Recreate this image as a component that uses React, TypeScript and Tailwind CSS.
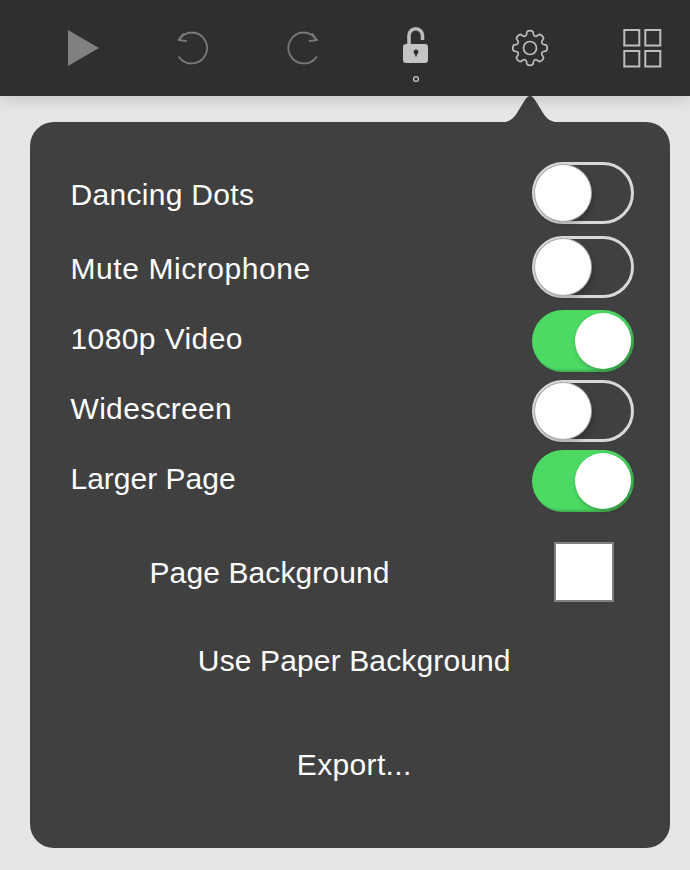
import React from "react";

function gearPath(cx: number, cy: number, rOut: number, rIn: number, teeth: number) {
  const pts: string[] = [];
  const step = (Math.PI * 2) / teeth;
  for (let i = 0; i < teeth; i++) {
    const a = i * step - Math.PI / 2;
    const p = (r: number, t: number) => `${(cx + r * Math.cos(a + t * step)).toFixed(2)} ${(cy + r * Math.sin(a + t * step)).toFixed(2)}`;
    pts.push(`${i === 0 ? "M" : "L"}${p(rIn + 0.6, -0.36)}`);
    pts.push(`L${p(rOut - 0.8, -0.22)}`);
    pts.push(`Q${p(rOut + 0.6, 0)} ${p(rOut - 0.8, 0.22)}`);
    pts.push(`L${p(rIn + 0.6, 0.36)}`);
    pts.push(`Q${p(rIn - 0.6, 0.5)} ${p(rIn + 0.6, 0.64)}`);
  }
  return pts.join(" ") + "Z";
}

function Toolbar() {
  return (
    <div className="h-24 w-full bg-[#2f2f2f] shadow-[0_4px_14px_rgba(0,0,0,0.14)] relative z-10">
      <svg width="690" height="96" viewBox="0 0 690 96" fill="none" className="block">
        <polygon points="68,30 68,66 99,48" fill="#808080" />
        <g stroke="#787878" strokeWidth="1.8" strokeLinecap="round" strokeLinejoin="round">
          <path d="M179 40 C182 35 187 32.5 192 32.5 A15.5 15.5 0 1 1 179 57" />
          <path d="M183 34 L178.5 40 L186 41" />
          <path d="M316.5 40 C313.5 35 308.5 32.5 303.5 32.5 A15.5 15.5 0 1 0 316.5 57" />
          <path d="M312.5 34 L317 40 L309.5 41" />
        </g>
        <path d="M409 46 V35.5 A6.75 6.75 0 0 1 422.5 35.5 V40" stroke="#bcbcbc" strokeWidth="3.6" />
        <rect x="403" y="44" width="25" height="19" rx="3" fill="#c4c4c4" />
        <circle cx="416" cy="52" r="2.4" fill="#2f2f2f" />
        <path d="M414.8 53 L417.2 53 L416.6 56.5 L415.4 56.5 Z" fill="#2f2f2f" />
        <circle cx="416" cy="79" r="2.4" stroke="#c8c8c8" strokeWidth="1.3" />
        <path d={gearPath(530, 48, 17.5, 12.8, 8)} stroke="#bcbcbc" strokeWidth="1.7" strokeLinejoin="round" />
        <circle cx="530" cy="48" r="6.5" stroke="#bcbcbc" strokeWidth="1.7" />
        <g stroke="#bdbdbd" strokeWidth="2">
          <rect x="624.3" y="30" width="15" height="15.5" />
          <rect x="645.3" y="30" width="15" height="15.5" />
          <rect x="624.3" y="51" width="15" height="15.5" />
          <rect x="645.3" y="51" width="15" height="15.5" />
        </g>
      </svg>
    </div>
  );
}

function Toggle({ on }: { on: boolean }) {
  return on ? (
    <div className="flex h-[62px] w-[102px] shrink-0 items-center justify-end rounded-full bg-[#4cd964] pr-[3px] shadow-[inset_-2px_-2px_2px_rgba(0,0,0,0.18)]">
      <div className="h-[56px] w-[56px] rounded-full bg-white shadow-[1px_2px_4px_rgba(0,0,0,0.25)]" />
    </div>
  ) : (
    <div className="flex h-[62px] w-[102px] shrink-0 items-center justify-start rounded-full border-[3px] border-[#d8d8d8]">
      <div className="h-[56px] w-[56px] rounded-full bg-white shadow-[0_0_0_1px_#a8a8a8,3px_4px_5px_rgba(0,0,0,0.2)]" />
    </div>
  );
}

function Row({ label, on, className, labelClass }: { label: string; on: boolean; className: string; labelClass: string }) {
  return (
    <div className={`flex items-center justify-between ${className}`}>
      <span className={labelClass}>{label}</span>
      <Toggle on={on} />
    </div>
  );
}

export default function App() {
  return (
    <div className="h-[870px] w-[690px] overflow-hidden bg-[#e6e6e6] font-['Liberation_Sans',sans-serif] text-[30px] leading-[34px] text-white">
      <Toolbar />
      <div className="relative ml-[30px] mt-[26px] h-[726px] w-[640px] rounded-[24px] bg-[#404040] pl-[40.5px] pr-[36px] pt-[40px]">
        <svg width="64" height="27" viewBox="0 0 64 27" className="absolute left-[468px] top-[-26px] block">
          <path d="M2 26.5 C11 26.5 15 23 19 17 L26 5.5 C28.5 1.5 30 0 32 0 C34 0 35.5 1.5 38 5.5 L45 17 C49 23 53 26.5 62 26.5 V27 H2 Z" fill="#404040" />
        </svg>
        <Row label="Dancing Dots" on={false} className="" labelClass="mt-1 tracking-[0.3px]" />
        <Row label="Mute Microphone" on={false} className="mt-3" labelClass="mt-1 tracking-[0.57px]" />
        <Row label="1080p Video" on={true} className="mt-3" labelClass="-mt-1 tracking-[0.4px]" />
        <Row label="Widescreen" on={false} className="mt-2" labelClass="-mt-1 tracking-[0.32px]" />
        <Row label="Larger Page" on={true} className="mt-2" labelClass="-mt-1" />
        <div className="mt-[30px] flex items-center justify-between">
          <span className="ml-[79px] mt-[1px] tracking-[0.1px]">Page Background</span>
          <div className="mr-[20px] h-[60px] w-[60px] border-2 border-[#808080] bg-white" />
        </div>
        <div className="mt-[42px] flex justify-center pl-[4px] tracking-[0.13px]">Use Paper Background</div>
        <div className="mt-[70px] flex justify-center pl-[4px] tracking-[0.35px]">Export...</div>
      </div>
    </div>
  );
}
